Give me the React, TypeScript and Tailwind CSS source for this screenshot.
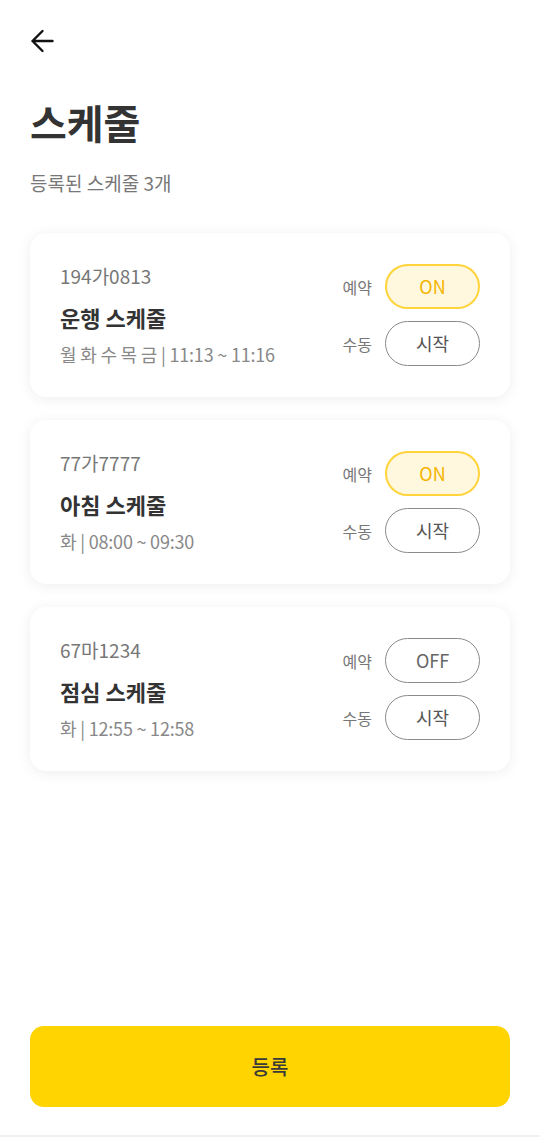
const schedules = [
  {
    plate: "194가0813",
    title: "운행 스케줄",
    days: "월 화 수 목 금",
    time: "11:13 ~ 11:16",
    reserved: true,
  },
  {
    plate: "77가7777",
    title: "아침 스케줄",
    days: "화",
    time: "08:00 ~ 09:30",
    reserved: true,
  },
  {
    plate: "67마1234",
    title: "점심 스케줄",
    days: "화",
    time: "12:55 ~ 12:58",
    reserved: false,
  },
];

function BackArrow() {
  return (
    <svg width="24" height="24" viewBox="0 0 24 24" fill="none">
      <path
        d="M22.5 12H2.5M12.5 2L2.5 12L12.5 22"
        stroke="#111"
        strokeWidth="2.4"
        strokeLinecap="round"
        strokeLinejoin="round"
      />
    </svg>
  );
}

export default function App() {
  return (
    <div
      className="h-[1137px] bg-white flex flex-col"
      style={{ fontFamily: '"Noto Sans CJK KR", "Noto Sans", sans-serif' }}
    >
      <div className="px-[30px] pt-[29px]">
        <BackArrow />
      </div>
      <div className="px-[30px]">
        <h1 className="mt-[45px] text-[40px] leading-[48px] font-bold text-[#333]">
          스케줄
        </h1>
        <p className="mt-[24px] text-[19px] leading-[26px] text-[#777]">
          등록된 스케줄 3개
        </p>
      </div>
      <div className="px-[30px] mt-[37px] flex flex-col gap-[23px]">
        {schedules.map((s, index) => (
          <div
            key={index}
            className="bg-white rounded-[16px] shadow-[0_2px_14px_rgba(0,0,0,0.07)] px-[30px] py-[30px] flex items-center justify-between"
          >
            <div>
              <p className="text-[19px] leading-[26px] text-[#777]">
                {s.plate}
              </p>
              <h3 className="mt-[13px] text-[22px] leading-[30px] font-bold text-[#333]">
                {s.title}
              </h3>
              <p className="mt-[9px] text-[18px] leading-[26px] text-[#888] tracking-[-0.2px]">
                {s.days} | {s.time}
              </p>
            </div>
            <div className="flex flex-col gap-[12px]">
              <div className="flex items-center gap-[13px]">
                <span className="text-[16px] text-[#777]">예약</span>
                <div
                  className={
                    s.reserved
                      ? "w-[95px] h-[45px] rounded-full border-2 border-[#ffd43b] bg-[#fff8df] flex items-center justify-center text-[18px] text-[#f5b400]"
                      : "w-[95px] h-[45px] rounded-full border-[1.5px] border-[#8a8a8a] bg-white flex items-center justify-center text-[18px] text-[#666]"
                  }
                >
                  {s.reserved ? "ON" : "OFF"}
                </div>
              </div>
              <div className="flex items-center gap-[13px]">
                <span className="text-[16px] text-[#777]">수동</span>
                <div className="w-[95px] h-[45px] rounded-full border-[1.5px] border-[#8a8a8a] bg-white flex items-center justify-center text-[18px] text-[#555]">
                  시작
                </div>
              </div>
            </div>
          </div>
        ))}
      </div>
      <div className="mt-auto px-[30px] pb-[28px]">
        <button className="w-full h-[81px] rounded-[14px] bg-[#ffd400] text-[20px] font-medium text-[#3a3a3a]">
          등록
        </button>
      </div>
      <div className="h-[2px] bg-[#f2f2f2]" />
    </div>
  );
}
